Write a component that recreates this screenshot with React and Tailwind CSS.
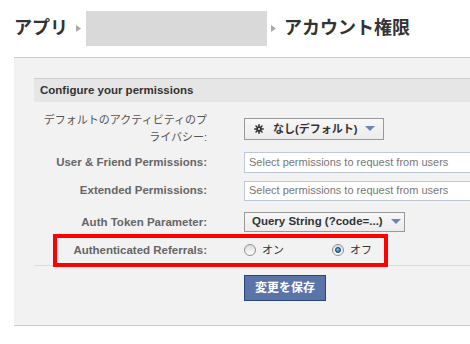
import React from "react";

const jp = { fontFamily: '"Liberation Sans", "Noto Sans CJK JP", sans-serif' };

const Crumb = ({ cls }) => (
  <svg width="5" height="7" viewBox="0 0 5 7" className={`shrink-0 ${cls}`}>
    <path d="M0 0 L5 3.5 L0 7 Z" fill="#aaaaaa" />
  </svg>
);

const Caret = () => (
  <svg width="10" height="6" viewBox="0 0 10 6" className="ml-[8px]">
    <path d="M0 0 H10 L5 5 Z" fill="#6d84b4" />
  </svg>
);

const Gear = () => (
  <svg width="10" height="10" viewBox="0 0 10 10" className="mr-[9px]">
    <g stroke="#333" strokeWidth="1.6" strokeLinecap="round">
      <path d="M5 0.8 V9.2" />
      <path d="M0.8 5 H9.2" />
      <path d="M2 2 L8 8" />
      <path d="M8 2 L2 8" />
    </g>
    <circle cx="5" cy="5" r="2.6" fill="#333" />
    <circle cx="5" cy="5" r="1" fill="#f0f0f0" />
  </svg>
);

const Radio = ({ on }) => (
  <span className="w-[12px] h-[12px] rounded-full border border-[#8f8f8f] bg-gradient-to-b from-[#dcdcdc] to-[#ffffff] flex items-center justify-center shrink-0">
    {on && <span className="w-[6px] h-[6px] rounded-full bg-[radial-gradient(circle_at_40%_35%,#7fc6f2,#0f5fa0)] border border-[#0b3f70]" />}
  </span>
);

const Row = ({ h, label, bold = true, children }) => (
  <div className={`flex items-center ${h}`}>
    <div
      className={`w-[173px] pl-[4px] text-right leading-[17px] ${bold ? "text-[11.5px] font-bold text-[#666]" : "text-[11px] text-[#555]"}`}
    >
      {label}
    </div>
    <div className="ml-[37px] flex items-center">{children}</div>
  </div>
);

export default function App() {
  return (
    <div className="w-[470px] h-[344px] bg-white overflow-hidden relative" style={jp}>
      <div className="pl-[14px] mt-[11px] h-[35px] flex items-center text-[18px] font-bold text-[#333]">
        <span>アプリ</span>
        <Crumb cls="ml-[8px] mr-[5px]" />
        <div className="w-[181px] h-[35px] bg-[#d9d9d9]" />
        <Crumb cls="ml-[4px] mr-[8px]" />
        <span>アカウント権限</span>
      </div>

      <div className="ml-[14px] mt-[11px] w-[600px] border-t border-b border-[#cccccc] bg-[#f2f2f2] pt-[20px] pl-[20px] pb-[24px]">
        <div className="h-[24px] border-t border-[#cccccc] bg-[#e6e6e6] pl-[6px] flex items-center text-[11.5px] font-bold text-[#333]">
          Configure your permissions
        </div>

        <div className="mt-[8px]">
          <Row h="h-[38px]" bold={false} label="デフォルトのアクティビティのプライバシー:">
            <button className="h-[22px] w-[140px] border border-[#999] bg-gradient-to-b from-[#f7f7f7] to-[#ececec] flex items-center pl-[9px] text-[11px] font-bold text-[#333]">
              <Gear />
              なし(デフォルト)
              <Caret />
            </button>
          </Row>
          <Row h="h-[28px]" label="User & Friend Permissions:">
            <div className="h-[21px] w-[300px] border border-[#bdc7d8] bg-white pl-[4px] flex items-center text-[11px] text-[#777]">
              Select permissions to request from users
            </div>
          </Row>
          <Row h="h-[29px]" label="Extended Permissions:">
            <div className="h-[20px] w-[300px] border border-[#bdc7d8] bg-white pl-[4px] flex items-center text-[11px] text-[#777]">
              Select permissions to request from users
            </div>
          </Row>
          <Row h="h-[34px]" label="Auth Token Parameter:">
            <button className="h-[20px] w-[161px] border border-[#999] bg-gradient-to-b from-[#f7f7f7] to-[#ececec] flex items-center pl-[7px] text-[11.5px] font-bold text-[#333]">
              Query String (?code=...)
              <Caret />
            </button>
          </Row>
          <Row h="h-[22px]" label="Authenticated Referrals:">
            <div className="flex items-center text-[11px] text-[#333]">
              <Radio />
              <span className="ml-[6px] w-[70px]">オン</span>
              <Radio on />
              <span className="ml-[6px]">オフ</span>
            </div>
          </Row>
        </div>

        <div className="mt-[4px] border-t border-[#dddddd]" />

        <div className="pt-[9px] pl-[210px]">
          <button className="h-[26px] w-[82px] border border-[#29447e] bg-[#5b74a8] text-white text-[12px] font-bold flex items-center justify-center">
            変更を保存
          </button>
        </div>
      </div>

      <div className="absolute left-[53px] top-[234px] w-[335px] h-[33px] border-[4px] border-[#ff0000]" />
    </div>
  );
}
